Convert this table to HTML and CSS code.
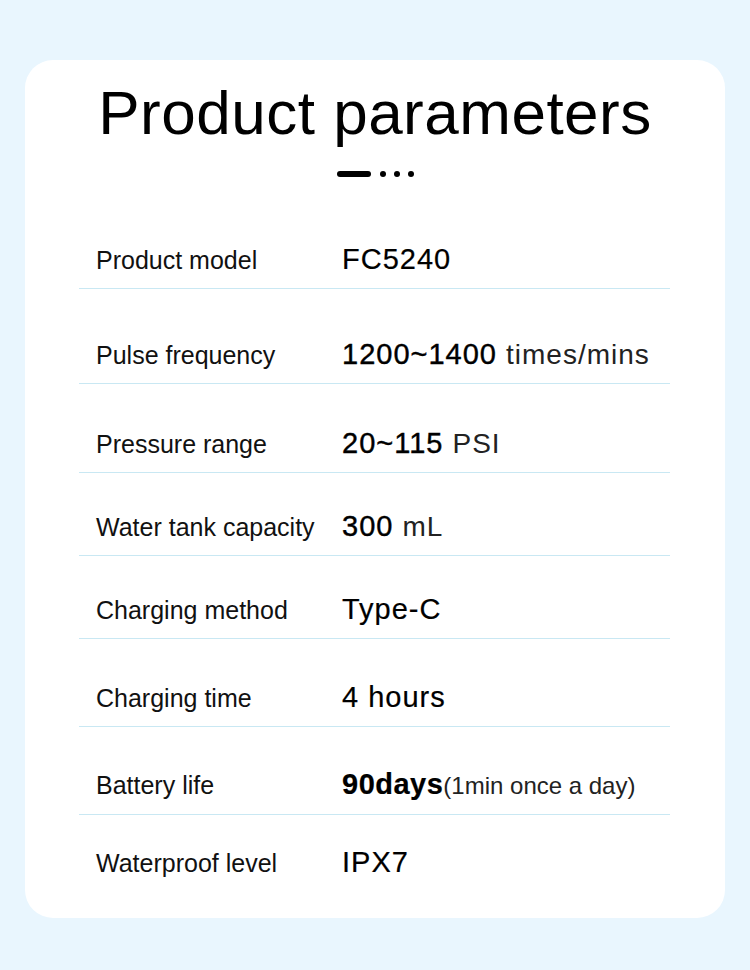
FILE: index.html
```html
<!DOCTYPE html>
<html lang="en">
<head>
<meta charset="utf-8">
<title>Product parameters</title>
<link rel="stylesheet" href="styles.css">
</head>
<body>
<main class="card">
  <h1 class="title">Product parameters</h1>
  <div class="dots"><span class="dash"></span><span class="dot"></span><span class="dot"></span><span class="dot"></span></div>
  <div class="table">
    <div class="row"><span class="label">Product model</span><span class="value">FC5240</span></div>
    <div class="row"><span class="label">Pulse frequency</span><span class="value"><span class="num">1200~1400</span> <span class="unit">times/mins</span></span></div>
    <div class="row"><span class="label">Pressure range</span><span class="value"><span class="num">20~115</span> <span class="unit">PSI</span></span></div>
    <div class="row"><span class="label">Water tank capacity</span><span class="value"><span class="num">300</span> <span class="unit">mL</span></span></div>
    <div class="row"><span class="label">Charging method</span><span class="value">Type-C</span></div>
    <div class="row"><span class="label">Charging time</span><span class="value">4 hours</span></div>
    <div class="row"><span class="label">Battery life</span><span class="value"><span class="bold">90days</span><span class="note">(1min once a day)</span></span></div>
    <div class="row"><span class="label">Waterproof level</span><span class="value">IPX7</span></div>
  </div>
</main>
</body>
</html>
```
FILE: styles.css
```css
html, body {
  margin: 0;
  padding: 0;
  background: #e9f6fe;
}
body {
  min-height: 970px;
  font-family: "Liberation Sans", Arial, sans-serif;
  color: #111;
  padding-top: 60px;
  box-sizing: border-box;
}
.card {
  display: block;
  width: 700px;
  margin: 0 0 0 25px;
  background: #ffffff;
  border-radius: 28px;
  padding: 22px 0 40px;
  box-sizing: border-box;
}
.title {
  margin: 0;
  font-weight: normal;
  font-size: 62px;
  line-height: 62px;
  letter-spacing: 0.5px;
  text-align: center;
  color: #000;
}
.dots {
  display: flex;
  justify-content: center;
  align-items: center;
  gap: 8px;
  margin-top: 27px;
  height: 6px;
}
.dash {
  width: 34px;
  height: 6px;
  border-radius: 3px;
  background: #000;
  margin-right: 1px;
}
.dot {
  width: 6px;
  height: 6px;
  border-radius: 50%;
  background: #000;
}
.table {
  margin: 67px 55px 0 54px;
}
.row {
  display: flex;
  align-items: baseline;
  line-height: 30px;
  padding: 0 0 13px 17px;
  border-bottom: 1px solid #c9e8f3;
}
.row:last-child {
  border-bottom: none;
  padding-bottom: 0;
}
.row:nth-child(2) { padding-top: 50px; }
.row:nth-child(3) { padding-top: 44px; }
.row:nth-child(4) { padding-top: 38px; }
.row:nth-child(5) { padding-top: 38px; }
.row:nth-child(6) { padding-top: 43px; }
.row:nth-child(7) { padding-top: 42px; }
.row:nth-child(8) { padding-top: 32px; }
.label {
  width: 246px;
  flex: none;
  font-size: 25px;
  color: #111;
}
.value {
  font-size: 29px;
  letter-spacing: 1px;
  color: #000;
  white-space: nowrap;
  -webkit-text-stroke: 0.2px #000;
}
.num {
  -webkit-text-stroke: 0.4px #000;
}
.unit {
  font-size: 28px;
  color: #222;
  -webkit-text-stroke: 0;
}
.bold {
  font-weight: bold;
  letter-spacing: 0.5px;
}
.note {
  font-size: 24px;
  letter-spacing: 0;
  color: #222;
  -webkit-text-stroke: 0;
}
```
